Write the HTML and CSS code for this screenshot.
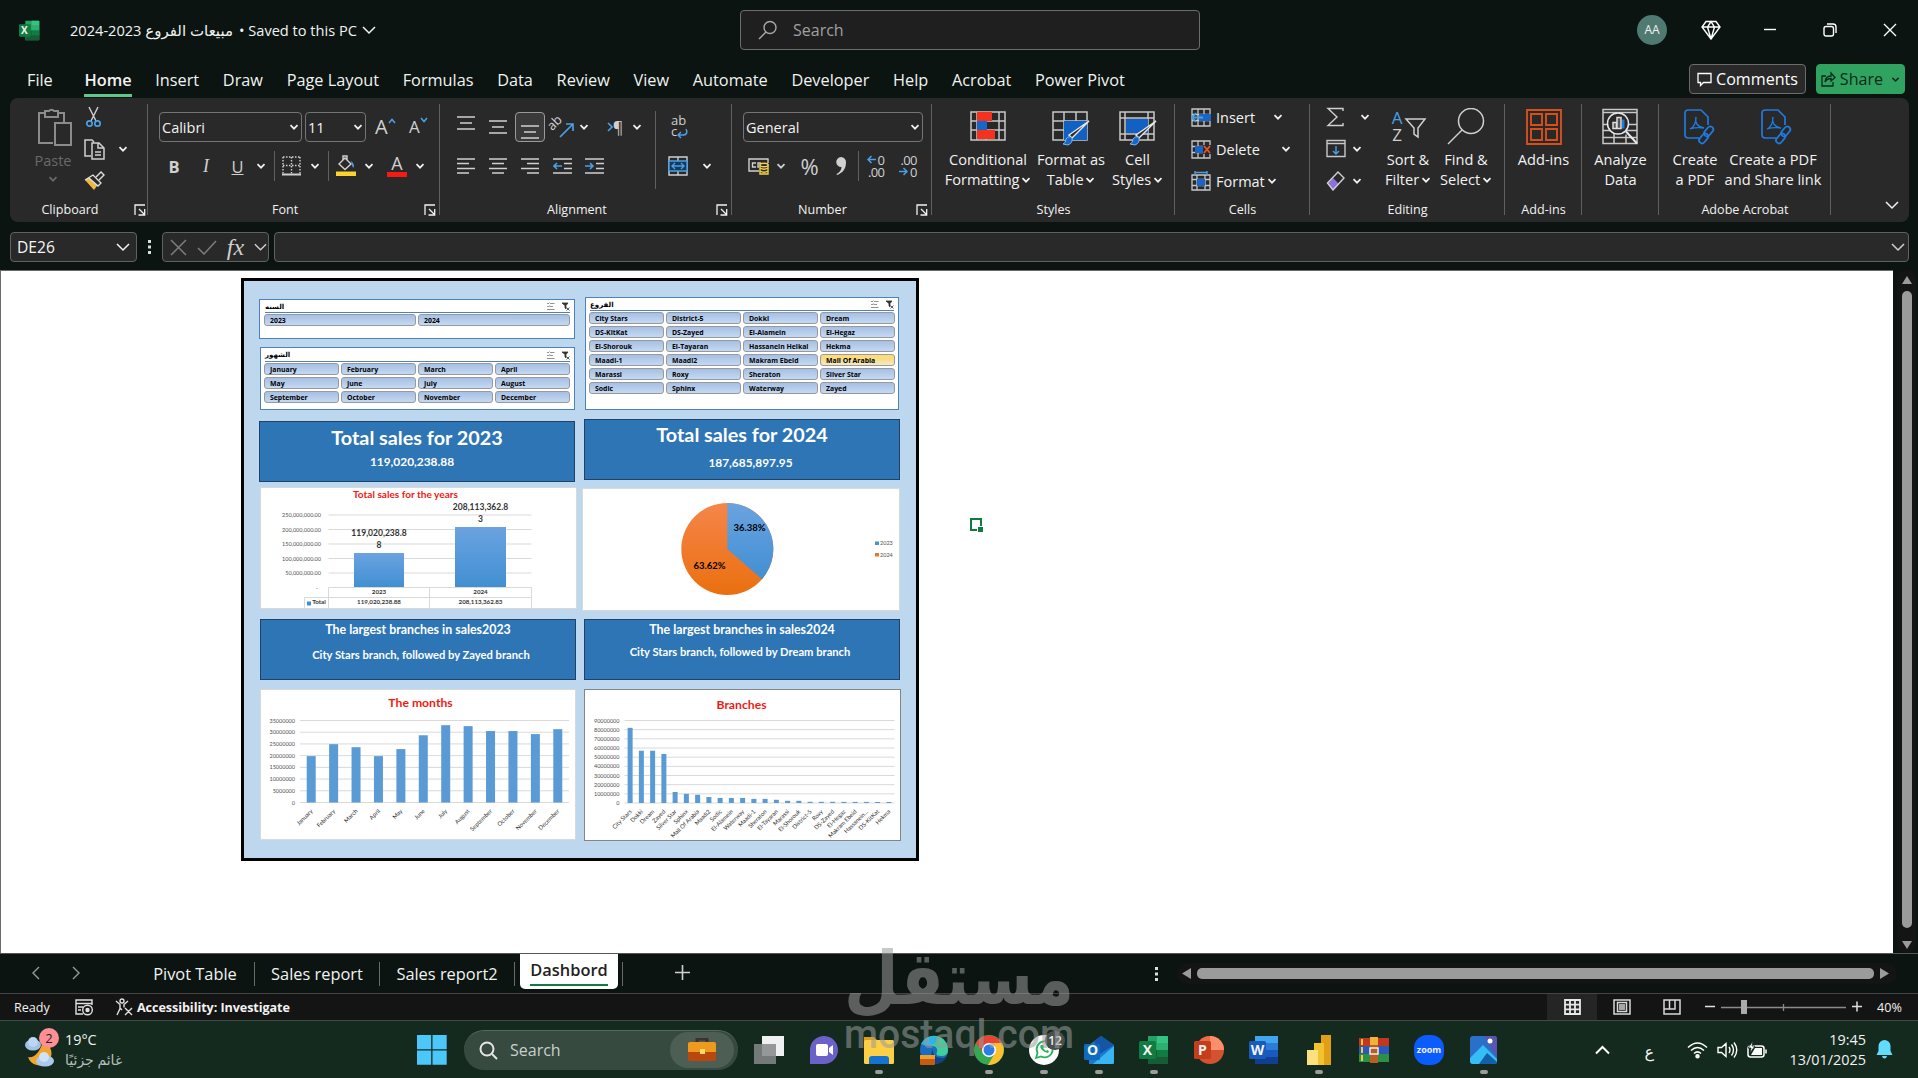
FILE: index.html
```html
<!DOCTYPE html>
<html lang="en">
<head>
    <meta charset="utf-8">
    <title>Excel</title>
    <link rel="stylesheet" href="styles.css">
</head>
<body>
    <!-- shared icons -->
    <svg class="defs" width="0" height="0">
        <symbol id="chev" viewBox="0 0 10 10"><path d="M1.5 3.2 5 6.7 8.5 3.2" fill="none" stroke="currentColor" stroke-width="1.7"/></symbol>
        <symbol id="chevThin" viewBox="0 0 14 10"><path d="M1 2 7 8 13 2" fill="none" stroke="currentColor" stroke-width="1.5"/></symbol>
        <symbol id="launch" viewBox="0 0 12 12"><path d="M1 11V1H11M5 5l5.5 5.5M10.7 5v6H4.5" fill="none" stroke="currentColor" stroke-width="1.3"/></symbol>
        <symbol id="multi" viewBox="0 0 9 9"><path d="M1 1l1 1 1.500-1.500M1 4l1 1 1.500-1.500M4 1.500h4.500M3.500 4.500H7M1 7.500h7.500" fill="none" stroke="#777" stroke-width=".8"/></symbol>
        <symbol id="clear" viewBox="0 0 9 9"><path d="M1 1h6L5 3.500V7L4 6V3.500zM5.500 5.500l3 3M8.500 5.500l-3 3" fill="#333" stroke="#333" stroke-width=".8"/></symbol>
        <symbol id="xl" viewBox="0 0 30 30"><path d="M9 1h19a1 1 0 0 1 1 1v26a1 1 0 0 1-1 1H9z" fill="#21a366"/><path d="M18 1h10a1 1 0 0 1 1 1v6H18z" fill="#33c481"/><path d="M9 15h20v13a1 1 0 0 1-1 1H9z" fill="#185c37"/><path d="M18 8h11v7H18z" fill="#2fae72"/><path d="M18 15h11v7H18z" fill="#107c41"/><rect y="6" width="17" height="18" rx="1.500" fill="#107c41"/></symbol>
        <linearGradient id="barFill" x1="0" y1="0" x2="0" y2="1"><stop offset="0" stop-color="#6ba3de"/><stop offset=".5" stop-color="#5599db"/><stop offset="1" stop-color="#428fd0"/></linearGradient>
        <linearGradient id="orangeFill" x1="0" y1="0" x2="0" y2="1"><stop offset="0" stop-color="#f5854a"/><stop offset=".5" stop-color="#f07a2c"/><stop offset="1" stop-color="#e9700f"/></linearGradient>
    </svg>

    <header class="titlebar">
        <span class="app-icon"><svg width="21" height="21"><use href="#xl"/></svg><b>X</b></span>
        <span class="doc-title" dir="ltr">2024-2023 <bdi>مبيعات الفروع</bdi></span><span class="saved">• Saved to this PC</span>
        <svg class="title-chev" width="14" height="10"><use href="#chevThin"/></svg>
        <div class="search"><svg width="20" height="20" viewBox="0 0 20 20" fill="none" stroke="#a8a8a8" stroke-width="1.400"><circle cx="12" cy="7.500" r="6"/><path d="M8 12 1 19"/></svg><span>Search</span></div>
        <div class="window-tools">
            <span class="avatar">AA</span>
            <svg width="20" height="20" viewBox="0 0 20 20" fill="none" stroke="#fff" stroke-width="1.400"><path d="M5 1.500h10L19 7l-9 12L1 7zM1 7h18M10 1.500 6.500 7 10 19l3.500-12z"/></svg>
            <svg width="14" height="14" viewBox="0 0 14 14"><path d="M1 6.500h12" stroke="#fff" stroke-width="1.400"/></svg>
            <svg width="14" height="14" viewBox="0 0 14 14" fill="none" stroke="#fff" stroke-width="1.400"><rect x="1" y="3.500" width="9.500" height="9.500" rx="2"/><path d="M4 1h6a3 3 0 0 1 3 3v6"/></svg>
            <svg width="14" height="14" viewBox="0 0 14 14"><path d="M1 1l12 12M13 1 1 13" stroke="#fff" stroke-width="1.400"/></svg>
        </div>
    </header>

    <nav class="menu">
        <span>File</span><span class="active">Home</span><span>Insert</span><span>Draw</span><span>Page Layout</span><span>Formulas</span><span>Data</span><span>Review</span><span>View</span><span>Automate</span><span>Developer</span><span>Help</span><span>Acrobat</span><span>Power Pivot</span>
        <div class="menu-buttons">
            <button class="comments"><svg width="15" height="15" viewBox="0 0 15 15" fill="none" stroke="#fff" stroke-width="1.300"><path d="M1 1.500h13v9H6.500L3.500 13.500V10.500H1z"/></svg>Comments</button>
            <button class="share"><svg width="15" height="16" viewBox="0 0 15 16" fill="none" stroke="#0b2a18" stroke-width="1.300"><path d="M5 5H1v10h11v-4M4 11c.5-4 3-6 6-6V2l4 4.500L10 10V7.500C7.500 7.500 5.500 8.500 4 11z"/></svg>Share<svg width="9" height="9"><use href="#chev"/></svg></button>
        </div>
    </nav>

    <section class="ribbon">
        <div class="group clipboard">
            <div class="group-body">
                <div class="paste">
                    <svg width="36" height="40" viewBox="0 0 36 40" fill="none" stroke="#8c8c8c" stroke-width="2"><path d="M16 36H2V6h6M20 6h7v9M8 4h4a3 3 0 0 1 5 0h4v6H8z"/><rect x="18" y="16" width="16" height="22"/></svg>
                    <span>Paste</span>
                    <svg width="10" height="10"><use href="#chev"/></svg>
                </div>
                <div class="tool-col">
                    <div><svg width="20" height="22" viewBox="0 0 20 22" fill="none" stroke="#d0d0d0" stroke-width="1.400"><path d="M5 1l7 14M14 1 7 15"/><g stroke="#4aa0e6" stroke-width="1.700"><circle cx="5.500" cy="17.500" r="2.700"/><circle cx="13.500" cy="17.500" r="2.700"/></g></svg></div>
                    <div><svg width="21" height="21" viewBox="0 0 21 21" fill="none" stroke="#d0d0d0" stroke-width="1.500"><path d="M7 17H1V1h7l2 2M8 4h7l5 5v11H8zM14 4v5h6M11 13h6M11 16h6"/></svg><svg class="chev" width="10" height="10"><use href="#chev"/></svg></div>
                    <div><svg width="21" height="20" viewBox="0 0 21 20"><path d="M1 9 8 5l7 7-5 7z" fill="#f3b73e"/><path d="M1 9l8-5 8 8-3 3-9-8z" fill="#292929" stroke="#e0e0e0" stroke-width="1.300"/><path d="M12 6l5-5 3 3-5 5" fill="none" stroke="#e0e0e0" stroke-width="1.400"/></svg></div>
                </div>
            </div>
            <div class="group-label">Clipboard<svg width="12" height="12"><use href="#launch"/></svg></div>
        </div>

        <div class="group font">
            <div class="group-body rows">
                <div class="row boxes">
                    <span class="combo font-name">Calibri<svg width="10" height="10"><use href="#chev"/></svg></span>
                    <span class="combo font-size">11<svg width="10" height="10"><use href="#chev"/></svg></span>
                    <span class="grow big">A<svg width="8" height="6" viewBox="0 0 8 6"><path d="M1 5 4 1.500 7 5" fill="none" stroke="#4aa0e6" stroke-width="1.600"/></svg></span>
                    <span class="grow">A<svg width="8" height="6" viewBox="0 0 8 6"><path d="M1 1l3 3.500L7 1" fill="none" stroke="#4aa0e6" stroke-width="1.600"/></svg></span>
                </div>
                <div class="row font-tools">
                    <b class="letter">B</b><i class="letter serif">I</i><u class="letter">U</u>
                    <svg width="10" height="10"><use href="#chev"/></svg><hr>
                    <svg width="19" height="20" viewBox="0 0 19 20" fill="none" stroke="#d0d0d0" stroke-width="1.400"><path d="M1 1h17M1 1v17M18 1v17M9.500 1v17M1 9.500h17" stroke-dasharray="1.500 1.500"/><path d="M0 18.500h19" stroke-width="2"/></svg>
                    <svg width="10" height="10"><use href="#chev"/></svg><hr>
                    <svg width="20" height="22" viewBox="0 0 20 22"><path d="M3 9l6-6 6 6-6 5.500z M7 5V1h4v4" fill="none" stroke="#d0d0d0" stroke-width="1.400"/><path d="M15 6q4 3 2.500 7-2-2-2.500-7" fill="#4aa0e6"/><path d="M0 16.500h20v4.500H0z" fill="#fbd230"/></svg>
                    <svg width="10" height="10"><use href="#chev"/></svg>
                    <span class="font-color">A</span>
                    <svg width="10" height="10"><use href="#chev"/></svg>
                </div>
            </div>
            <div class="group-label">Font<svg width="12" height="12"><use href="#launch"/></svg></div>
        </div>

        <div class="group alignment">
            <div class="group-body">
                <div class="rows align-left">
                    <div class="row align-top">
                        <svg class="lines up" width="18" height="18" viewBox="0 0 18 18"><path d="M0 2h18M3 8h12M0 14h18"/></svg>
                        <svg class="lines" width="18" height="18" viewBox="0 0 18 18"><path d="M0 3h18M3 9h12M0 15h18"/></svg>
                        <span class="pressed"><svg class="lines down" width="18" height="18" viewBox="0 0 18 18"><path d="M0 4h18M3 10h12M0 16h18"/></svg></span>
                        <span class="orient"><small>ab</small><svg width="16" height="16" viewBox="0 0 16 16" fill="none" stroke="#4aa0e6" stroke-width="1.700"><path d="M1 15 14 2M7 2h7v7"/></svg></span>
                        <svg width="10" height="10"><use href="#chev"/></svg>
                        <span class="pilcrow"><svg width="6" height="10" viewBox="0 0 6 10"><path d="M1 1l4 4-4 4" fill="none" stroke="#4aa0e6" stroke-width="1.600"/></svg>¶</span>
                        <svg width="10" height="10"><use href="#chev"/></svg>
                    </div>
                    <div class="row align-h">
                        <svg class="lines" width="18" height="18" viewBox="0 0 18 18"><path d="M0 2h18M0 6.500h12M0 11.500h18M0 16h12"/></svg>
                        <svg class="lines" width="18" height="18" viewBox="0 0 18 18"><path d="M0 2h18M3 6.500h12M0 11.500h18M3 16h12"/></svg>
                        <svg class="lines" width="18" height="18" viewBox="0 0 18 18"><path d="M0 2h18M6 6.500h12M0 11.500h18M6 16h12"/></svg>
                        <svg class="lines" width="19" height="18" viewBox="0 0 19 18"><path d="M0 2h19M11 6.500h8M11 11.500h8M0 16h19"/><path class="blue" d="M9 9H1M4 6 1 9l3 3"/></svg>
                        <svg class="lines" width="19" height="18" viewBox="0 0 19 18"><path d="M0 2h19M11 6.500h8M11 11.500h8M0 16h19"/><path class="blue" d="M0 9h8M5 6l3 3-3 3"/></svg>
                    </div>
                </div>
                <div class="rows align-right">
                    <div class="row"><span class="wrap-text">ab<br>c<svg width="11" height="10" viewBox="0 0 11 10"><path d="M9 0c2 4 0 6-3 6H1M4 3 1 6l3 3" fill="none" stroke="#4aa0e6" stroke-width="1.500"/></svg></span></div>
                    <div class="row merge"><svg width="20" height="20" viewBox="0 0 20 20" fill="none" stroke="#d0d0d0" stroke-width="1.400"><path d="M1 1h18v18H1zM10 1v4M10 15v4"/><path d="M1 5h18v10H1z" fill="#173a5c" stroke="#4aa0e6"/><path d="M4 10h12M7 7l-3 3 3 3M13 7l3 3-3 3" stroke="#4aa0e6"/></svg><svg width="10" height="10"><use href="#chev"/></svg></div>
                </div>
            </div>
            <div class="group-label">Alignment<svg width="12" height="12"><use href="#launch"/></svg></div>
        </div>

        <div class="group number">
            <div class="group-body rows">
                <div class="row boxes"><span class="combo number-format">General<svg width="10" height="10"><use href="#chev"/></svg></span></div>
                <div class="row number-tools">
                    <svg width="22" height="20" viewBox="0 0 22 20" fill="none" stroke="#d0d0d0" stroke-width="1.400"><path d="M11 15H1V3h19v4M8 7H4.500v4H8M13 7h-3v4h1"/><g stroke="#f5d24b" fill="#292929"><path d="M12 9v9h8V9z"/><ellipse cx="16" cy="9" rx="4" ry="1.700"/><path d="M12 12q4 2.500 8 0M12 15q4 2.500 8 0"/></g></svg>
                    <svg width="10" height="10"><use href="#chev"/></svg>
                    <span class="percent">%</span>
                    <svg width="12" height="20" viewBox="0 0 12 20"><path d="M6 1a5 5 0 0 1 5 5.500C11 13 7.500 17 2 19l-.5-1C4.500 16.500 6.500 14 6.500 11A5 5 0 1 1 6 1z" fill="#d0d0d0"/></svg><hr>
                    <span class="decimals"><svg width="9" height="9" viewBox="0 0 9 9"><path d="M9 4.500H1M4.500 1 1 4.500 4.500 8" fill="none" stroke="#4aa0e6" stroke-width="1.500"/></svg>0<br>.00</span>
                    <span class="decimals">.00<br><svg width="9" height="9" viewBox="0 0 9 9"><path d="M0 4.500h8M4.500 1 8 4.500 4.500 8" fill="none" stroke="#4aa0e6" stroke-width="1.500"/></svg>0</span>
                </div>
            </div>
            <div class="group-label">Number<svg width="12" height="12"><use href="#launch"/></svg></div>
        </div>

        <div class="group styles">
            <div class="group-body">
                <div class="big-btn cond"><svg width="36" height="36" viewBox="0 0 36 36"><path d="M1 3h34v28H1zM7 3v28M16 3v28M29 3v28M1 12h34M1 21h34" fill="none" stroke="#c8c8c8" stroke-width="1.500"/><path d="M7 3h15v9H7zM7 21h18v9H7z" fill="#f5321e"/><path d="M7 12h10v9H7z" fill="#1a66c8"/></svg><span>Conditional</span><span>Formatting <svg width="10" height="10"><use href="#chev"/></svg></span></div>
                <div class="big-btn table"><svg width="38" height="36" viewBox="0 0 38 36"><path d="M1 3h34v28H1zM12 3v28M24 3v28M1 12h34M1 21h34" fill="none" stroke="#c8c8c8" stroke-width="1.500"/><path d="M12 12h23v19H12z" fill="#1160c4"/><path d="M37 12 20 29l-3-3z" fill="#292929" stroke="#e8e8e8" stroke-width="1.400"/><path d="M11 35q3-1 3-5 3-4 6-1 1 5-4 7z" fill="#1a66c8" stroke="#7ab8ef"/></svg><span>Format as</span><span>Table <svg width="10" height="10"><use href="#chev"/></svg></span></div>
                <div class="big-btn cell"><svg width="38" height="36" viewBox="0 0 38 36"><path d="M1 3h34v28H1zM6 3v28M29 3v28M1 9h34M1 25h34" fill="none" stroke="#c8c8c8" stroke-width="1.500"/><path d="M7 10h22v14H7z" fill="#1160c4"/><path d="M37 12 20 29l-3-3z" fill="#292929" stroke="#e8e8e8" stroke-width="1.400"/><path d="M11 35q3-1 3-5 3-4 6-1 1 5-4 7z" fill="#1a66c8" stroke="#7ab8ef"/></svg><span>Cell</span><span>Styles <svg width="10" height="10"><use href="#chev"/></svg></span></div>
            </div>
            <div class="group-label">Styles</div>
        </div>

        <div class="group cells">
            <div class="group-body tool-col">
                <div><svg width="20" height="19" viewBox="0 0 20 19"><path d="M1 1h18v17H1zM7 1v17M13 1v17M1 6.500h18M1 12.500h18" fill="none" stroke="#c8c8c8" stroke-width="1.300"/><path d="M8 6h12v7H8z" fill="#1a66c8"/><path d="M12 9.500H1M5 5 1 9.500 5 14" fill="none" stroke="#4aa0e6" stroke-width="1.800"/></svg><span class="w-insert">Insert</span><svg class="chev" width="10" height="10"><use href="#chev"/></svg></div>
                <div><svg width="20" height="19" viewBox="0 0 20 19"><path d="M1 1h18v17H1zM7 1v17M13 1v17M1 6.500h18M1 12.500h18" fill="none" stroke="#c8c8c8" stroke-width="1.300"/><path d="M4 6h8v7H4z" fill="#1a66c8"/><path d="M12 5h8v9h-8z" fill="#292929"/><path d="M13 6l6 7M19 6l-6 7" stroke="#e8552a" stroke-width="1.900"/></svg><span class="w-delete">Delete</span><svg class="chev" width="10" height="10"><use href="#chev"/></svg></div>
                <div><svg width="20" height="20" viewBox="0 0 20 20"><path d="M1 4h18v15H1zM6 4v15M14 4v15M1 8.500h18M1 14.500h18" fill="none" stroke="#c8c8c8" stroke-width="1.300"/><path d="M6 8h8v7H6z" fill="#1a66c8"/><path d="M4 1.500h12M4 0v4M16 0v4" stroke="#4aa0e6" stroke-width="1.400"/></svg><span class="w-format">Format</span><svg class="chev" width="10" height="10"><use href="#chev"/></svg></div>
            </div>
            <div class="group-label">Cells</div>
        </div>

        <div class="group editing">
            <div class="group-body">
                <div class="tool-col">
                    <div><svg width="20" height="20" viewBox="0 0 20 20"><path d="M17 4V1.500H2L11 10l-9 8.500h15V16" fill="none" stroke="#d0d0d0" stroke-width="1.400"/></svg><svg class="chev far" width="10" height="10"><use href="#chev"/></svg></div>
                    <div><svg width="20" height="20" viewBox="0 0 20 20" fill="none" stroke="#c8c8c8" stroke-width="1.400"><path d="M1 1.500h18v16H1zM1 4.500h18"/><path d="M10 7v8M7 12l3 3 3-3" stroke="#4aa0e6"/></svg><svg class="chev" width="10" height="10"><use href="#chev"/></svg></div>
                    <div><svg width="20" height="20" viewBox="0 0 20 20"><path d="M2 12l5-5 6 6-6 6z" fill="#8f6fe0"/><path d="M1.500 12 12 1l6 6L7 19z" fill="none" stroke="#d0d0d0" stroke-width="1.400"/></svg><svg class="chev" width="10" height="10"><use href="#chev"/></svg></div>
                </div>
                <div class="big-btn sort"><span class="az"><em>A</em>Z</span><svg width="38" height="36" viewBox="0 0 38 36"><path d="M17 10h19l-7 9v9l-4-3v-6l-8-9z" fill="none" stroke="#d0d0d0" stroke-width="1.500"/></svg><span>Sort &amp;</span><span>Filter <svg width="10" height="10"><use href="#chev"/></svg></span></div>
                <div class="big-btn find"><svg width="38" height="38" viewBox="0 0 38 38"><circle cx="24" cy="13" r="12.500" fill="none" stroke="#d0d0d0" stroke-width="1.500"/><path d="M15 22 1 36" stroke="#d0d0d0" stroke-width="1.500"/></svg><span>Find &amp;</span><span>Select <svg width="10" height="10"><use href="#chev"/></svg></span></div>
            </div>
            <div class="group-label">Editing</div>
        </div>

        <div class="group addins">
            <div class="group-body"><div class="big-btn"><svg width="36" height="36" viewBox="0 0 36 36" fill="none" stroke="#d6501c" stroke-width="1.900"><path d="M1 1h34v34H1zM5 5h11v11H5zM20 5h11v11H20zM5 20h11v11H5zM20 20h11v11H20z"/></svg><span>Add-ins</span></div></div>
            <div class="group-label">Add-ins</div>
        </div>

        <div class="group analyze">
            <div class="group-body"><div class="big-btn"><svg width="37" height="37" viewBox="0 0 37 37" fill="none" stroke="#c8c8c8" stroke-width="1.500"><path d="M1 1h34v34H1zM1 4h34M1 16h34M1 22h34M1 29h34M12 22v13M24 26v9"/><circle cx="16" cy="15" r="10.500" fill="#292929" stroke="#e8e8e8"/><path d="M24 23l11 12" stroke="#e8e8e8" stroke-width="2"/><path d="M11 14h3.500v6H11zM15 9h4v11h-4z" fill="#555" stroke="#ddd"/><path d="M20 11h2.500v9H20z" fill="#1a7be0" stroke="none"/></svg><span>Analyze</span><span>Data</span></div></div>
            <div class="group-label"></div>
        </div>

        <div class="group acrobat">
            <div class="group-body">
                <div class="big-btn create"><svg width="34" height="36" viewBox="0 0 34 36" fill="none" stroke="#1f7be0" stroke-width="1.700"><path d="M16 29H5a3 3 0 0 1-3-3V4a3 3 0 0 1 3-3h13l7 7v8"/><path d="M7 20q6-3 6-12-2 9 8 11-8-1-14 1z" stroke-width="1.300"/><rect x="23" y="17" width="6" height="11" rx="3" transform="rotate(40 26 22)"/><rect x="18" y="24" width="6" height="11" rx="3" transform="rotate(40 21 29)"/></svg><span>Create</span><span>a PDF</span></div>
                <div class="big-btn create-share"><svg width="34" height="36" viewBox="0 0 34 36" fill="none" stroke="#1f7be0" stroke-width="1.700"><path d="M16 29H5a3 3 0 0 1-3-3V4a3 3 0 0 1 3-3h13l7 7v8"/><path d="M7 20q6-3 6-12-2 9 8 11-8-1-14 1z" stroke-width="1.300"/><rect x="23" y="17" width="6" height="11" rx="3" transform="rotate(40 26 22)"/><rect x="18" y="24" width="6" height="11" rx="3" transform="rotate(40 21 29)"/></svg><span>Create a PDF</span><span>and Share link</span></div>
            </div>
            <div class="group-label">Adobe Acrobat</div>
        </div>
        <svg class="collapse" width="14" height="10"><use href="#chevThin"/></svg>
    </section>

    <section class="formula-bar">
        <div class="name-box">DE26<svg width="14" height="10"><use href="#chevThin"/></svg></div>
        <svg class="vdots" width="4" height="14" viewBox="0 0 4 14" fill="#ddd"><path d="M0 0h3v3H0zM0 5.500h3v3H0zM0 11h3v3H0z"/></svg>
        <div class="fx-box">
            <svg width="17" height="17" viewBox="0 0 17 17"><path d="M1 1l15 15M16 1 1 16" stroke="#7d7d7d" stroke-width="1.500"/></svg>
            <svg width="20" height="15" viewBox="0 0 20 15"><path d="M1 8l6 6L19 1" fill="none" stroke="#7d7d7d" stroke-width="1.500"/></svg>
            <i>fx</i>
            <svg width="13" height="10" viewBox="0 0 14 10"><use href="#chevThin"/></svg>
        </div>
        <div class="formula-input"><svg width="14" height="10"><use href="#chevThin"/></svg></div>
    </section>

    <main class="workspace">
        <div class="sheet">
            <div class="dashboard">
                <div class="col left">
                    <div class="slicer s-year">
                        <div class="slicer-head"><b>السنه</b><svg width="9" height="9"><use href="#multi"/></svg><svg width="9" height="9"><use href="#clear"/></svg></div>
                        <div class="items two"><span>2023</span><span>2024</span></div>
                    </div>
                    <div class="slicer s-month">
                        <div class="slicer-head"><b>الشهور</b><svg width="9" height="9"><use href="#multi"/></svg><svg width="9" height="9"><use href="#clear"/></svg></div>
                        <div class="items"><span>January</span><span>February</span><span>March</span><span>April</span><span>May</span><span>June</span><span>July</span><span>August</span><span>September</span><span>October</span><span>November</span><span>December</span></div>
                    </div>
                    <div class="banner b-2023"><h2>Total sales for 2023</h2><p>119,020,238.88</p></div>
                    <svg class="chart c-years" id="yearsChart" width="317" height="122" viewBox="260 487 317 122"></svg>
                    <div class="banner small t-2023"><h3>The largest branches in sales2023</h3><p>City Stars branch, followed by Zayed branch</p></div>
                    <svg class="chart c-months" id="monthsChart" width="316" height="151" viewBox="260 689 316 151"></svg>
                </div>
                <div class="col right">
                    <div class="slicer s-branch">
                        <div class="slicer-head"><b>الفروع</b><svg width="9" height="9"><use href="#multi"/></svg><svg width="9" height="9"><use href="#clear"/></svg></div>
                        <div class="items"><span>City Stars</span><span>District-5</span><span>Dokki</span><span>Dream</span><span>DS-KitKat</span><span>DS-Zayed</span><span>El-Alamein</span><span>El-Hegaz</span><span>El-Shorouk</span><span>El-Tayaran</span><span>Hassanein Heikal</span><span>Hekma</span><span>Maadi-1</span><span>Maadi2</span><span>Makram Ebeid</span><span class="hover">Mall Of Arabia</span><span>Marassi</span><span>Roxy</span><span>Sheraton</span><span>Silver Star</span><span>Sodic</span><span>Sphinx</span><span>Waterway</span><span>Zayed</span></div>
                    </div>
                    <div class="banner b-2024"><h2>Total sales for 2024</h2><p>187,685,897.95</p></div>
                    <svg class="chart c-pie" width="318" height="123" viewBox="582 488 318 123">
                        <circle cx="727.3" cy="549" r="46" fill="url(#orangeFill)"/>
                        <path d="M727.3 549V503A46 46 0 0 1 762 579.200z" fill="url(#barFill)"/>
                        <text class="pct" x="749.5" y="531">36.38%</text>
                        <text class="pct" x="709.5" y="569">63.62%</text>
                        <path d="M875 541.500h4v3.500h-4z" fill="#4a91d3"/><path d="M875 553h4v3.500h-4z" fill="#ee7420"/>
                        <text class="tick" x="880" y="545">2023</text><text class="tick" x="880" y="557">2024</text>
                    </svg>
                    <div class="banner small t-2024"><h3>The largest branches in sales2024</h3><p>City Stars branch, followed by Dream branch</p></div>
                    <svg class="chart c-branches" id="branchesChart" width="317" height="152" viewBox="584 689 317 152"></svg>
                </div>
            </div>
            <svg class="cell-cursor" width="13" height="14" viewBox="0 0 13 14"><path d="M7 12H1V1h10v7" fill="none" stroke="#107c41" stroke-width="2"/><path d="M8 9h5v5H8z" fill="#107c41"/></svg>
        </div>
        <div class="vscroll">
            <svg width="10" height="8" viewBox="0 0 10 8"><path d="M5 0l5 8H0z" fill="#9b9b9b"/></svg>
            <div class="thumb"></div>
            <svg width="10" height="8" viewBox="0 0 10 8"><path d="M5 8 0 0h10z" fill="#9b9b9b"/></svg>
        </div>
    </main>

    <section class="sheet-tabs">
        <svg class="nav-prev" width="8" height="14" viewBox="0 0 8 14"><path d="M7 1 1 7l6 6" fill="none" stroke="#9a9a9a" stroke-width="1.400"/></svg>
        <svg class="nav-next" width="8" height="14" viewBox="0 0 8 14"><path d="M1 1l6 6-6 6" fill="none" stroke="#9a9a9a" stroke-width="1.400"/></svg>
        <span class="tab t1">Pivot Table</span><span class="tab t2">Sales report</span><span class="tab t3">Sales report2</span>
        <span class="tab current"><u>Dashbord</u></span><span class="tab-end"></span>
        <svg class="add" width="15" height="15" viewBox="0 0 15 15"><path d="M7.500 0v15M0 7.500h15" stroke="#d0d0d0" stroke-width="1.600"/></svg>
        <svg class="vdots" width="4" height="14" viewBox="0 0 4 14" fill="#ddd"><path d="M0 0h3v3H0zM0 5.500h3v3H0zM0 11h3v3H0z"/></svg>
        <div class="hscroll">
            <svg width="9" height="11" viewBox="0 0 9 11"><path d="M0 5.500 9 0v11z" fill="#9b9b9b"/></svg>
            <div class="thumb"></div>
            <svg width="9" height="11" viewBox="0 0 9 11"><path d="M9 5.500 0 0v11z" fill="#9b9b9b"/></svg>
        </div>
    </section>

    <section class="status">
        <span class="ready">Ready</span>
        <svg class="macro" width="18" height="17" viewBox="0 0 18 17" fill="none" stroke="#e0e0e0" stroke-width="1.400"><path d="M8 15H1V1h16v5M1 4.500h16M3 8h5M3 11h3"/><circle cx="12.500" cy="11" r="4.800"/><circle cx="12.500" cy="11" r="1.500" fill="#e0e0e0"/></svg>
        <svg class="access" width="18" height="18" viewBox="0 0 18 18" fill="none" stroke="#e0e0e0" stroke-width="1.400"><circle cx="7" cy="3" r="2"/><path d="M1 3l4 3.500v4L2 17M13 3 9 6.500v3M5 10l2 2M10 10l7 7M17 10l-7 7"/></svg>
        <b>Accessibility: Investigate</b>
        <div class="views">
            <span class="on"><svg width="17" height="16" viewBox="0 0 17 16" fill="none" stroke="#e8e8e8" stroke-width="1.800"><path d="M1 1h15v14H1zM6 1v14M11 1v14M1 5.700h15M1 10.300h15"/></svg></span>
            <span><svg width="18" height="16" viewBox="0 0 18 16" fill="none" stroke="#d8d8d8" stroke-width="1.500"><path d="M1 1h16v14H1zM4.500 3.500h9v9h-9zM6 6h6M6 8h6M6 10h6"/></svg></span>
            <span><svg width="18" height="16" viewBox="0 0 18 16" fill="none" stroke="#d8d8d8" stroke-width="1.500"><path d="M1 1h16v14H1zM1 10h11V1M6.500 1v9"/></svg></span>
        </div>
        <svg class="zoom" width="160" height="16" viewBox="0 0 160 16" stroke="#e0e0e0" fill="none"><path d="M1 7.500h10M148 7.500h10M153 2.500v10" stroke-width="1.500"/><path d="M17 8.500h125M79.500 5v7" stroke="#8a8a8a" stroke-width="1.300"/><path d="M37 1h6v14h-6z" fill="#ababab" stroke="none"/></svg>
        <span class="zoom-value">40%</span>
    </section>

    <footer class="taskbar">
        <div class="weather">
            <svg width="32" height="36" viewBox="0 0 32 36"><path d="M19 10a12 12 0 1 1-15 15q9 2 15-15z" fill="#f2a52b"/><ellipse cx="9" cy="13" rx="8" ry="5.500" fill="#9fc2ea"/><circle cx="9" cy="10" r="5" fill="#bcd6f3"/><ellipse cx="21" cy="29" rx="9" ry="5.500" fill="#a9caef"/><circle cx="20" cy="25" r="5" fill="#cfe2f8"/></svg>
            <span class="badge">2</span>
            <div>19°C<br><bdi>غائم جزئيًا</bdi></div>
        </div>
        <svg class="start" width="30" height="30" viewBox="0 0 30 30" fill="#4cc7fa"><path d="M0 0h14.200v14.200H0zM15.500 0h14.200v14.200H15.500zM0 15.500h14.200v14.200H0zM15.500 15.500h14.200v14.200H15.500z"/></svg>
        <div class="task-search"><svg width="19" height="19" viewBox="0 0 19 19" fill="none" stroke="#e5e5e5" stroke-width="2"><circle cx="8" cy="8" r="6.500"/><path d="M13 13l5 5"/></svg>Search<span class="brief"><svg width="28" height="24" viewBox="0 0 28 24"><path d="M9 5V1h10v4" fill="none" stroke="#3a3330" stroke-width="3"/><rect y="4" width="28" height="19" rx="2" fill="#b9480f"/><path d="M0 6q0-2 2-2h24q2 0 2 2v8H0z" fill="#ee9a1e"/><path d="M12 11h5v5h-5z" fill="#fbd96b"/></svg></span></div>
        <div class="apps">
            <span><svg width="30" height="30" viewBox="0 0 30 30"><path d="M8 1h22v20H8z" fill="#eef0f2"/><path d="M0 9h22v20H0z" fill="#85888a" opacity=".85"/></svg></span>
            <span><svg width="30" height="30" viewBox="0 0 30 30"><path d="M1 29V14a14 14 0 1 1 14 15z" fill="#6b62c9"/><rect x="7" y="9" width="12" height="12" rx="2" fill="#fff"/><path d="M20 13l4-3v10l-4-3z" fill="#fff"/></svg></span>
            <span class="open"><svg width="30" height="30" viewBox="0 0 30 30"><path d="M0 2h10l4 4v8H0z" fill="#e09e17"/><rect y="5" width="30" height="24" rx="1.500" fill="#fccf45"/><path d="M5 29v-5q0-3 3-3h14q3 0 3 3v5z" fill="#1573cf"/></svg></span>
            <span><svg width="30" height="30" viewBox="0 0 30 30"><circle cx="15" cy="15" r="14" fill="#1b6dc1"/><path d="M4 6A14 14 0 0 1 29 15q0 6-7 6-6 0-4-4 1-5-4-6-6-1-10-5z" fill="#3fcf9b"/><path d="M2 9A14 14 0 0 1 19 2q-2 8-8 9-5 0-9-2z" fill="#2bb5ea"/><path d="M14 14q-1 9 10 9l4-2q-4 8-12 8-6-8-2-15z" fill="#12427f"/><rect x="1" y="20" width="15" height="10" rx="1" fill="#c85b14"/><path d="M1 20h15v4H1z" fill="#f0a12c"/></svg></span>
            <span class="open"><svg width="30" height="30" viewBox="0 0 30 30"><circle cx="15" cy="15" r="15" fill="#34a853"/><path d="M2 8A15 15 0 0 1 28 8H15L9 18z" fill="#ea4335"/><path d="M28 8H15l6 10-7 12A15 15 0 0 0 28 8z" fill="#fbc02d"/><circle cx="15" cy="15" r="7" fill="#fff"/><circle cx="15" cy="15" r="5.500" fill="#2a7de9"/></svg></span>
            <span class="open"><svg width="30" height="30" viewBox="0 0 30 30"><circle cx="15" cy="15" r="15" fill="#fff"/><path d="M7 23l1.500-5A8 8 0 1 1 12 21.500z" fill="none" stroke="#2db25c" stroke-width="1.800"/><path d="M12 10q-2 2 1 5t6 3l1-2-2-1-1 1-3-3 1-1-1-2z" fill="#2db25c"/></svg><em>12</em></span>
            <span class="open office"><svg width="30" height="30" viewBox="0 0 30 30"><path d="M5 10 17 1l13 9v19H5z" fill="#1a78d0"/><path d="M10 6 17 1l13 9-16 10z" fill="#1455a8"/><path d="M30 11v16q0 2-2 2H9z" fill="#38b5f2"/><rect y="9" width="16" height="16" rx="1.500" fill="#0f6cbd"/></svg><b>O</b></span>
            <span class="open office"><svg width="30" height="30"><use href="#xl"/></svg><b>X</b></span>
            <span class="office"><svg width="30" height="30" viewBox="0 0 30 30"><circle cx="16" cy="15" r="14" fill="#d35230"/><path d="M16 1a14 14 0 0 1 14 14H16z" fill="#ff8f6b"/><path d="M16 1A14 14 0 0 0 2 15h14z" fill="#ed6c47"/><rect y="6" width="17" height="18" rx="1.500" fill="#c43e1c"/></svg><b>P</b></span>
            <span class="office"><svg width="30" height="30" viewBox="0 0 30 30"><path d="M6 1h23v28H6z" fill="#2b7cd3"/><path d="M6 1h23v7H6z" fill="#41a5ee"/><path d="M6 22h23v7H6z" fill="#103f91"/><path d="M6 15h23v7H6z" fill="#185abd"/><rect y="6" width="17" height="18" rx="1.500" fill="#185abd"/></svg><b>W</b></span>
            <span class="open"><svg width="26" height="30" viewBox="0 0 26 30"><path d="M15 0h10v30H15z" fill="#e0a016"/><path d="M8 8h10v22H8z" fill="#f2c32f"/><path d="M1 15h11v15H1z" fill="#fbe07e"/></svg></span>
            <span><svg width="30" height="28" viewBox="0 0 30 28"><rect y="2" width="30" height="8" fill="#c2371f"/><rect y="10" width="30" height="8" fill="#2c59b8"/><rect y="18" width="30" height="8" fill="#2a9147"/><path d="M2 3h2v6H2zM2 11h2v6H2zM2 19h2v6H2z" fill="#f1c93a"/><path d="M11 1h8v26h-8z" fill="#b85f24"/><path d="M11 1h8v8h-8z" fill="#f1b23a"/><path d="M11 12h8v6h-8z" fill="none" stroke="#eee" stroke-width="1.500"/></svg></span>
            <span class="zoom-app">zoom</span>
            <span class="open"><svg width="27" height="28" viewBox="0 0 27 28"><rect width="27" height="28" rx="3" fill="#2a70c8"/><path d="M14 0h10a3 3 0 0 1 3 3v19z" fill="#5a55b0"/><path d="M0 22 13 9l14 14v2a3 3 0 0 1-3 3H3a3 3 0 0 1-3-3z" fill="#35bdf5"/><path d="M9 28 17 17l10 9q0 2-3 2z" fill="#1160a8"/><circle cx="20" cy="5" r="2.500" fill="#fff"/></svg></span>
        </div>
        <div class="tray">
            <svg class="up" width="15" height="10" viewBox="0 0 15 10"><path d="M1 8.500l6.500-6.500L14 8.500" fill="none" stroke="#fff" stroke-width="2"/></svg>
            <bdi class="lang">ع</bdi>
            <svg width="21" height="18" viewBox="0 0 21 18" fill="none" stroke="#fff" stroke-width="1.500"><path d="M1 6.500q9.500-9 19 0M4 9.500q6.500-6 13 0M7 12.500q3.500-3.200 7 0"/><circle cx="10.500" cy="15.300" r="1.500" fill="#fff"/></svg>
            <svg width="21" height="18" viewBox="0 0 21 18" fill="none" stroke="#fff" stroke-width="1.400"><path d="M1 6.500h3.500L9 2.500v13l-4.500-4H1zM12 6q2 3 0 6M14.500 3.500q4 5.500 0 11M17 1.500q5.500 7.500 0 15"/></svg>
            <svg width="21" height="18" viewBox="0 0 21 18" fill="none" stroke="#fff" stroke-width="1.500"><rect x="1" y="5" width="16" height="11" rx="2.500"/><path d="M19 8.500v4"/><path d="M8 7h7v7H4z" fill="#fff" stroke="none"/><path d="M6 0 1 7h3l-1 5 5-7H5z" fill="#fff" stroke="#152a1f" stroke-width=".8"/></svg>
            <div class="clock">19:45<br>13/01/2025</div>
            <svg class="bell" width="17" height="19" viewBox="0 0 17 19"><path d="M8.500 0a6 6 0 0 1 6 6v5l2 4H.500l2-4V6a6 6 0 0 1 6-6zM6 16h5q-.500 2.500-2.500 2.500T6 16z" fill="#61dcfb"/></svg>
        </div>
    </footer>

    <svg class="watermark" width="240" height="125" viewBox="0 0 240 125">
        <text class="wm-ar" x="120" y="59" textLength="230" lengthAdjust="spacingAndGlyphs">مستقل</text>
        <text class="wm-en" x="120" y="103" textLength="230" lengthAdjust="spacingAndGlyphs">mostaql.com</text>
    </svg>

    <script>
        const NS = "http://www.w3.org/2000/svg";

        function add(svg, name, attrs, text) {
            const el = document.createElementNS(NS, name);
            for (const key in attrs) el.setAttribute(key, attrs[key]);
            if (text) el.textContent = text;
            svg.appendChild(el);
            return el;
        }

        // simple column chart: gridlines, value ticks, bars, slanted labels
        function columnChart(id, o) {
            const svg = document.getElementById(id);
            add(svg, "text", { class: "chart-title", x: o.titleX, y: o.titleY }, o.title);
            for (let i = 0; i <= o.steps; i++) {
                const y = o.bottom - (o.bottom - o.top) * i / o.steps;
                add(svg, "line", { class: "grid", x1: o.left, x2: o.right, y1: y, y2: y });
                add(svg, "text", { class: "tick end", x: o.left - 5, y: y + 2 }, String(i * o.unit));
            }
            const pitch = (o.right - o.left) / o.data.length;
            o.data.forEach(function (item, i) {
                const cx = o.left + pitch * (i + 0.5);
                const h = (o.bottom - o.top) * item[1] / (o.steps * o.unit);
                add(svg, "rect", { class: "bar", x: cx - o.barWidth / 2, y: o.bottom - h, width: o.barWidth, height: h });
                const x = cx + 2, y = o.bottom + 9;
                add(svg, "text", { class: "slant", x: x, y: y, transform: "rotate(-45 " + x + " " + y + ")" }, item[0]);
            });
        }

        columnChart("monthsChart", {
            title: "The months", titleX: 420.5, titleY: 706.5,
            left: 300, right: 569, top: 720.5, bottom: 802.5, steps: 7, unit: 5000000, barWidth: 9,
            data: [["January", 19800000], ["February", 24900000], ["March", 23600000], ["April", 19800000],
                ["May", 22800000], ["June", 28700000], ["July", 33000000], ["August", 32600000],
                ["September", 30500000], ["October", 30500000], ["November", 29200000], ["December", 31300000]]
        });

        columnChart("branchesChart", {
            title: "Branches", titleX: 741.5, titleY: 708.5,
            left: 624.5, right: 894.5, top: 720.5, bottom: 803, steps: 9, unit: 10000000, barWidth: 5,
            data: [["City Stars", 82000000], ["Dokki", 57000000], ["Dream", 57000000], ["Zayed", 53500000],
                ["Silver Star", 12000000], ["Sphinx", 10000000], ["Mall Of Arabia", 9000000], ["Maadi2", 6500000],
                ["Sodic", 5500000], ["El-Alamein", 5500000], ["Waterway", 5500000], ["Maadi-1", 4500000],
                ["Sheraton", 4500000], ["El-Tayaran", 3500000], ["Marassi", 2400000], ["El-Shorouk", 2400000],
                ["District-5", 1300000], ["Roxy", 1300000], ["DS-Zayed", 1300000], ["El-Hegaz", 1200000],
                ["Makram Ebeid", 1200000], ["Hassanein…", 1200000], ["DS-KitKat", 1100000], ["Hekma", 1100000]]
        });

        // yearly totals with the data table under the plot
        const years = document.getElementById("yearsChart");
        add(years, "text", { class: "chart-title years", x: 405.5, y: 498 }, "Total sales for the years");
        ["50,000,000.00", "100,000,000.00", "150,000,000.00", "200,000,000.00", "250,000,000.00"].forEach(function (label, i) {
            const y = 573 - i * 14.5;
            add(years, "line", { class: "grid", x1: 328.5, x2: 531.5, y1: y, y2: y });
            add(years, "text", { class: "tick end", x: 321, y: y + 2 }, label);
        });
        add(years, "text", { class: "tick end", x: 318, y: 590 }, "-");
        add(years, "rect", { x: 354, y: 553, width: 50, height: 34.5, fill: "url(#barFill)" });
        add(years, "rect", { x: 455, y: 527, width: 51, height: 60.5, fill: "url(#barFill)" });
        add(years, "path", { class: "grid", d: "M328.5 587.5h203M304.5 597.5h227M328.5 587.5v21M429.5 587.5v21M531.5 587.5v21M304.5 597.5v11" });
        add(years, "path", { d: "M307 601.500h4v4h-4z", fill: "#428fd0" });
        [["119,020,238.8", 379, 536], ["8", 379, 548], ["208,113,362.8", 480.5, 510], ["3", 480.5, 522]].forEach(function (t) {
            add(years, "text", { class: "value", x: t[1], y: t[2] }, t[0]);
        });
        [["2023", 379, 594], ["2024", 480.5, 594], ["119,020,238.88", 379, 604], ["208,113,362.83", 480.5, 604], ["Total", 319, 604]].forEach(function (t) {
            add(years, "text", { class: "cell-text", x: t[1], y: t[2] }, t[0]);
        });
    </script>
</body>
</html>
```
FILE: styles.css
```css
* {
    box-sizing: border-box;
}

body {
    margin: 0;
    width: 1918px;
    height: 1078px;
    overflow: hidden;
    background: #0b1410;
    color: #f2f2f2;
    font-family: "Open Sans", "DejaVu Sans", sans-serif;
    font-size: 15px;
}

svg {
    flex: none;
    display: block;
}

.defs {
    position: absolute;
}

/* title bar */
.titlebar {
    display: flex;
    align-items: center;
    height: 60px;
    padding-left: 19px;
    font-size: 14.6px;
    white-space: nowrap;
}

.app-icon,
.office {
    position: relative;
}

.app-icon b {
    position: absolute;
    left: 2px;
    top: 4px;
    font-size: 10px;
    line-height: 13px;
}

.doc-title {
    width: 163px;
    margin-left: 30px;
}

.doc-title bdi {
    font-size: 15px;
}

.saved {
    width: 126px;
    margin-left: 6px;
}

.title-chev {
    margin-left: -3px;
}

.search {
    display: flex;
    align-items: center;
    width: 460px;
    height: 40px;
    margin-left: 364px;
    padding-left: 17px;
    gap: 15px;
    border: 1px solid #6c6c6c;
    border-radius: 4px;
    background: #1f1f1f;
    color: #a0a0a0;
    font-size: 16px;
}

.window-tools {
    display: flex;
    align-items: center;
    margin-left: 437px;
}

.window-tools svg {
    margin-left: 46px;
}

.window-tools .avatar + svg {
    margin-left: 34px;
}

.window-tools .avatar + svg + svg {
    margin-left: 42px;
}

.avatar {
    width: 30px;
    height: 30px;
    border-radius: 50%;
    background: #4f7a72;
    font-size: 12px;
    line-height: 30px;
    text-align: center;
}

/* menu */
.menu {
    display: flex;
    align-items: center;
    gap: 23.7px;
    height: 38px;
    padding: 0 13px 0 27px;
    font-size: 16.3px;
    white-space: nowrap;
}

.menu > span {
    padding-top: 2px;
    line-height: 30px;
}

.menu .active {
    margin: 2px 0 0 8px;
    padding-top: 3px;
    border-bottom: 3px solid #5cc98a;
    font-weight: 600;
    line-height: 27px;
}

.menu-buttons {
    display: flex;
    gap: 10px;
    margin-left: auto;
}

.menu-buttons button {
    display: flex;
    align-items: center;
    justify-content: center;
    gap: 4px;
    height: 30px;
    padding: 0;
    border: 1px solid #6c6c6c;
    border-radius: 4px;
    background: #292929;
    color: #fff;
    font: 500 16.1px "Open Sans", sans-serif;
}

.menu-buttons .comments {
    width: 117px;
}

.menu-buttons .share {
    width: 89px;
    border-color: #2fa35f;
    background: #2fa35f;
    color: #0b2a18;
    font-weight: 400;
}

.share svg:last-child {
    margin-left: 4px;
}

/* ribbon */
.ribbon {
    display: flex;
    height: 124px;
    margin: 0 9px 0 10px;
    border-radius: 8px;
    background: #292929;
}

.group {
    display: flex;
    flex-direction: column;
    height: 124px;
    background: linear-gradient(#606060, #606060) right 6px / 1px 111px no-repeat;
}

.group-body {
    display: flex;
    height: 100px;
}

.group-label {
    display: flex;
    align-items: center;
    justify-content: center;
    height: 24px;
    padding-bottom: 1px;
    font-size: 12.6px;
}

.group-label svg {
    margin-right: 4px;
}

.clipboard { width: 138px; }
.font { width: 292px; }
.alignment { width: 292px; }
.number { width: 200px; }
.styles { width: 243px; }
.cells { width: 135px; }
.editing { width: 195px; }
.addins, .analyze { width: 77px; }
.acrobat { width: 172px; }

.clipboard .group-label { padding-left: 32px; }
.clipboard .group-label svg { margin-left: 35px; margin-right: 3px; }
.font .group-label { padding-left: 124px; justify-content: flex-start; }
.alignment .group-label { padding-left: 107px; justify-content: flex-start; }
.number .group-label { padding-left: 66px; justify-content: flex-start; }
.font .group-label svg, .alignment .group-label svg, .number .group-label svg { margin-left: auto; }

.paste {
    display: flex;
    flex-direction: column;
    align-items: center;
    width: 60px;
    margin-left: 12px;
    padding: 9px 0 0 2px;
    color: #6a6a6a;
    font-size: 14.5px;
}

.paste > svg:first-child {
    margin-left: 3px;
}

.paste span {
    height: 27px;
    line-height: 27px;
}

.tool-col {
    display: flex;
    flex-direction: column;
    padding-top: 3px;
}

.tool-col > div {
    display: flex;
    align-items: center;
    height: 32px;
    font-size: 14.5px;
}

.clipboard .tool-col {
    padding-left: 2px;
}

.clipboard .tool-col .chev {
    margin-left: 13px;
}

.rows {
    display: flex;
    flex-direction: column;
    gap: 9px;
    padding-top: 14px;
}

.row {
    display: flex;
    align-items: center;
    height: 30px;
}

.row hr {
    width: 1px;
    height: 30px;
    margin: 0;
    border: 0;
    background: #606060;
}

.boxes {
    gap: 3px;
    padding-left: 11px;
}

.combo {
    display: flex;
    align-items: center;
    justify-content: space-between;
    height: 30px;
    padding: 0 2px;
    border: 1px solid #757575;
    border-radius: 4px;
    font-size: 14.5px;
}

.font-name { width: 143px; }
.font-size { width: 61px; }
.number-format { width: 180px; }

.grow {
    display: flex;
    align-items: flex-start;
    width: 33px;
    padding-left: 4px;
    color: #d0d0d0;
    font-size: 17px;
    line-height: 30px;
}

.grow.big {
    padding-left: 6px;
    font-size: 20px;
    line-height: 28px;
}

.grow svg {
    margin-top: 5px;
}

.font-tools {
    display: grid;
    grid-template-columns: 32px 32px 31px 16px 10px 25px 22px 4px 32px 14px 42px 4px;
    justify-items: center;
    justify-content: start;
    padding-left: 10px;
}

.letter {
    color: #d0d0d0;
    font-size: 16.5px;
}

.serif {
    font-family: "Liberation Serif", serif;
    font-size: 18px;
}

.font-color {
    width: 20px;
    height: 21px;
    border-bottom: 5px solid #f51a12;
    color: #d0d0d0;
    font-size: 18px;
    line-height: 15px;
    text-align: center;
}

.align-left {
    width: 215px;
    padding-left: 10px;
}

.align-top {
    display: grid;
    grid-template-columns: 32px 32px 32px 33px 9px 46px 6px;
    justify-items: center;
}

.align-h {
    display: grid;
    grid-template-columns: repeat(5, 32px);
    justify-items: center;
}

.lines {
    fill: none;
    stroke: #d0d0d0;
    stroke-width: 1.6;
}

.lines .blue {
    stroke: #4aa0e6;
}

.lines.up {
    margin-top: -6px;
}

.lines.down {
    margin-top: 7px;
}

.pressed {
    display: flex;
    align-items: center;
    justify-content: center;
    width: 30px;
    height: 30px;
    border: 1px solid #9a9a9a;
    border-radius: 4px;
    background: #3a3a3a;
}

.orient {
    display: flex;
    width: 22px;
    height: 24px;
    color: #d0d0d0;
}

.orient small {
    width: 6px;
    font-size: 13px;
    line-height: 17px;
    transform: rotate(-45deg) translateX(-2px);
}

.orient svg {
    margin: 7px 0 0 1px;
}

.pilcrow {
    display: flex;
    align-items: center;
    margin-left: 8px;
    color: #d0d0d0;
    font-size: 16px;
}

.align-right {
    width: 76px;
    padding-left: 13px;
    background: linear-gradient(#606060, #606060) 0 13px / 1px 78px no-repeat;
}

.wrap-text {
    padding-left: 3px;
    color: #d0d0d0;
    font-size: 13px;
    line-height: 11px;
}

.wrap-text svg {
    display: inline-block;
    vertical-align: -3px;
}

.merge {
    gap: 14px;
}

.number-tools {
    display: grid;
    grid-template-columns: 27px 18px 39px 24px 10px 25px 40px;
    justify-items: center;
    justify-content: start;
    padding-left: 13px;
    color: #d0d0d0;
}

.percent {
    font-size: 22px;
    line-height: 28px;
}

.decimals {
    font-size: 13px;
    line-height: 12px;
    text-align: right;
    letter-spacing: -.6px;
}

.decimals svg {
    display: inline-block;
    margin-right: 2px;
    vertical-align: 1px;
}

.big-btn {
    position: relative;
    display: flex;
    flex-direction: column;
    align-items: center;
    width: 77px;
    padding-top: 10px;
    font-size: 14.6px;
    line-height: 20px;
    text-align: center;
    white-space: nowrap;
}

.big-btn > svg {
    height: 38px;
    margin-bottom: 3px;
}

.big-btn > span > svg {
    display: inline-block;
    margin-left: -2px;
}

.styles .group-body { padding-left: 11px; }
.cond { width: 90px; }
.table { width: 76px; }
.cell { width: 57px; }

.cells .group-body {
    padding: 3px 0 0 16px;
    flex-direction: column;
}

.cells .group-body span {
    margin: 0 4px 0 5px;
}

.cells .group-body .w-insert { width: 53px; }
.cells .group-body .w-delete { width: 61px; }
.cells .group-body .w-format { width: 47px; }

.editing .tool-col {
    width: 68px;
    padding-left: 16px;
}

.editing .chev { margin-left: 6px; }
.editing .chev.far { margin-left: 14px; }
.editing .sort { width: 60px; }
.editing .find { width: 56px; }

.big-btn .az {
    position: absolute;
    left: 13px;
    top: 11px;
    width: 12px;
    color: #d0d0d0;
    font-size: 17px;
    line-height: 17px;
}

.az em {
    display: block;
    color: #4aa0e6;
    font-style: normal;
}

.create { width: 72px; }
.create-share { width: 84px; }
.create > svg { margin-left: 10px; }
.create-share > svg { margin-left: 8px; }

.collapse {
    align-self: flex-end;
    margin: 0 10px 12px auto;
}

/* formula bar */
.formula-bar {
    display: flex;
    align-items: center;
    height: 48px;
    padding: 2px 9px 0 10px;
}

.name-box,
.fx-box,
.formula-input {
    display: flex;
    align-items: center;
    justify-content: space-between;
    height: 30px;
    padding: 0 6px;
    border: 1px solid #616161;
    border-radius: 4px;
    background: #292929;
    color: #d0d0d0;
}

.name-box {
    width: 127px;
    color: #f5f5f5;
    font-size: 15.6px;
}

.formula-bar .vdots {
    margin: 0 10px 0 11px;
}

.fx-box {
    width: 107px;
    padding: 0 1px 0 7px;
}

.fx-box i {
    font: italic 24px "Liberation Serif", serif;
}

.formula-input {
    flex: 1;
    justify-content: flex-end;
    margin-left: 5px;
    padding: 0 3px;
}

/* sheet */
.workspace {
    display: flex;
    height: 683px;
}

.sheet {
    position: relative;
    width: 1893px;
    border: 1px solid #6b6b6b;
    border-right: 0;
    border-bottom: 0;
    background: #fff;
}

.cell-cursor {
    position: absolute;
    left: 969px;
    top: 247px;
}

.dashboard {
    display: flex;
    width: 678px;
    height: 583px;
    margin: 7px 0 0 240px;
    border: 3px solid #000;
    background: #bdd7ee;
}

.col {
    display: flex;
    flex-direction: column;
    align-items: flex-start;
}

.left {
    width: 338px;
    padding: 18px 0 0 15px;
}

.right {
    padding-top: 16px;
}

.slicer {
    padding: 1px 3px 0 4px;
    border: 1px solid #4f81bd;
    background: #fff;
    color: #000;
}

.s-year { width: 316px; height: 40px; }
.s-month { width: 315px; height: 63px; margin: 8px 0 0 1px; padding-left: 3px; }
.s-branch { width: 314px; height: 113px; margin-left: 3px; padding-left: 3px; }

.slicer-head {
    display: flex;
    align-items: center;
    gap: 6px;
    height: 12px;
    margin: 0 1px 1px 1px;
    border-bottom: 1px solid #4f81bd;
    font: bold 7px "DejaVu Sans", sans-serif;
}

.slicer-head b {
    flex: 1;
}

.items {
    display: grid;
    grid-template-columns: repeat(4, 75px);
    gap: 2px;
}

.items.two {
    grid-template-columns: 152px 152px;
}

.items span {
    height: 12px;
    padding-left: 5px;
    border: 1px solid #999;
    border-radius: 3px;
    background: linear-gradient(#a6bfe4, #c4d9f2);
    font: bold 6.9px/11px "Open Sans", sans-serif;
    white-space: nowrap;
}

.items .hover {
    background: linear-gradient(#fbdc7e 40%, #f2ead0);
}

.s-month .slicer-head {
    height: 13px;
}

.banner {
    width: 316px;
    height: 61px;
    border: 1px solid #1f4266;
    background: #2e75b6;
    color: #fff;
    font-family: Lato, sans-serif;
    text-align: center;
}

.banner h2,
.banner h3,
.banner p {
    margin: 0;
    font-weight: bold;
    white-space: nowrap;
}

.banner h2 {
    padding-top: 3px;
    font-size: 19.8px;
    line-height: 24px;
}

.banner p {
    font-size: 11.9px;
    line-height: 26px;
}

.banner h3 {
    font-size: 12.4px;
    line-height: 20px;
}

.banner.small p {
    font-size: 11.2px;
    line-height: 29px;
}

.b-2023 { margin-top: 11px; }
.b-2023 p { padding-right: 10px; }
.c-years { margin: 5px 0 0 1px; }
.t-2023 { margin: 10px 0 0 1px; }
.t-2023 p { padding-left: 6px; }
.c-months { margin: 9px 0 0 1px; }

.b-2024 { margin: 9px 0 0 2px; }
.b-2024 h2 { padding-top: 2px; }
.b-2024 p { padding-left: 17px; line-height: 34px; }
.c-pie { margin-top: 8px; }
.t-2024 { margin: 8px 0 0 2px; }
.t-2024 p { padding-right: 4px; }
.banner.t-2024 p { line-height: 24px; }
.c-branches { margin: 9px 0 0 2px; }

.chart {
    background: #fff;
    outline: 1px solid #d9d9d9;
    outline-offset: -1px;
    font-family: Lato, sans-serif;
}

.c-branches {
    outline-color: #858585;
}

.chart text {
    text-anchor: middle;
}

.chart .chart-title {
    fill: #f01a12;
    font-size: 12.2px;
    font-weight: bold;
}

.chart .years {
    font-size: 10.1px;
}

.chart .grid {
    fill: none;
    stroke: #d9d9d9;
}

.chart .bar {
    fill: #5b9bd5;
}

.chart .tick {
    fill: #505050;
    font-size: 5.5px;
    text-anchor: start;
}

.chart .end,
.chart .slant {
    text-anchor: end;
}

.chart .slant {
    fill: #303030;
    font-size: 5.9px;
}

.chart .value {
    fill: #333;
    font-size: 8.5px;
    font-weight: bold;
}

.chart .cell-text {
    fill: #333;
    font-size: 6.2px;
    font-weight: bold;
}

.chart .pct {
    font-size: 9.5px;
    font-weight: bold;
}

.vscroll {
    display: flex;
    flex-direction: column;
    align-items: center;
    gap: 7px;
    width: 19px;
    height: 683px;
    margin-left: 4px;
    padding-top: 6px;
    border-radius: 9px;
    background: #141414;
}

.thumb {
    border-radius: 5px;
    background: #9b9b9b;
}

.vscroll .thumb {
    width: 10px;
    height: 637px;
}

.vscroll svg:last-child {
    margin-top: 6px;
}

/* sheet tabs */
.sheet-tabs {
    display: flex;
    align-items: center;
    height: 41px;
    border-top: 1px solid #555;
    border-bottom: 1px solid #444;
    font-size: 16.4px;
    white-space: nowrap;
}

.nav-prev { margin-left: 32px; }
.nav-next { margin-left: 32px; }
.nav-prev, .nav-next, .add { margin-top: -2px; }

.tab {
    height: 24px;
    border-right: 1px solid #6a6a6a;
    line-height: 24px;
    text-align: center;
}

.t1 { width: 119px; margin-left: 56px; }
.t2 { width: 125px; }
.t3 { width: 135px; }

.current {
    align-self: flex-start;
    width: 98px;
    height: 35px;
    margin-left: 5px;
    border: 0;
    border-radius: 0 0 5px 5px;
    background: #fff;
    color: #222;
    font-weight: 600;
    line-height: 32px;
}

.current u {
    display: inline-block;
    height: 32px;
    border-bottom: 2px solid #107c41;
    text-decoration: none;
}

.tab-end {
    width: 1px;
    height: 24px;
    margin-left: 4px;
    background: #6a6a6a;
}

.add { margin-left: 52px; }
.sheet-tabs .vdots { margin-left: 465px; }

.hscroll {
    display: flex;
    align-items: center;
    gap: 6px;
    width: 720px;
    height: 21px;
    margin-left: 18px;
    padding-left: 5px;
    border-radius: 10px;
    background: #141414;
}

.hscroll .thumb {
    width: 677px;
    height: 11px;
}

/* status bar */
.status {
    display: flex;
    align-items: center;
    height: 26px;
    background: #141414;
    font-size: 12.6px;
    white-space: nowrap;
}

.ready { width: 61px; padding-left: 14px; }
.macro { margin-left: 14px; }
.access { margin: 0 4px 0 22px; }

.status b {
    width: 160px;
    letter-spacing: -.07px;
}

.views {
    display: flex;
    margin-left: 1250px;
}

.views span {
    display: flex;
    align-items: center;
    justify-content: center;
    width: 50px;
    height: 26px;
}

.views .on {
    background: #252525;
}

.zoom {
    margin-left: 7px;
}

.zoom-value {
    margin-left: 13px;
}

/* taskbar */
.taskbar {
    display: flex;
    align-items: center;
    height: 58px;
    border-top: 1px solid #3b5045;
    background: #152a1f;
    font-size: 14.4px;
}

.weather {
    position: relative;
    display: flex;
    align-items: center;
    gap: 9px;
    width: 393px;
    padding-left: 24px;
    line-height: 20px;
}

.weather bdi {
    color: #b5beb9;
    font-size: 14px;
}

.badge {
    position: absolute;
    left: 39px;
    top: -2px;
    width: 20px;
    height: 20px;
    border-radius: 50%;
    background: #ff8f95;
    color: #222;
    font-size: 13px;
    text-align: center;
}

.start {
    margin-left: 24px;
}

.task-search {
    display: flex;
    align-items: center;
    gap: 12px;
    width: 274px;
    height: 40px;
    margin-left: 17px;
    padding-left: 15px;
    border-radius: 20px;
    border-top: 1px solid #56685e;
    background: #364a3f;
    color: #c9d0cc;
    font-size: 16px;
}

.brief {
    display: flex;
    align-items: center;
    justify-content: center;
    width: 64px;
    height: 36px;
    margin: 0 4px 0 auto;
    border-radius: 18px;
    background: #4d5f55;
}

.apps {
    display: flex;
    margin-left: 3px;
}

.apps > span {
    position: relative;
    display: flex;
    align-items: center;
    justify-content: center;
    width: 55px;
    height: 57px;
    padding-top: 1px;
}

.apps .open::after {
    content: "";
    position: absolute;
    left: 24px;
    bottom: 4px;
    width: 8px;
    height: 4px;
    border-radius: 2px;
    background: #9b9b9b;
}

.office b {
    position: absolute;
    left: 13px;
    top: 18px;
    width: 17px;
    font-size: 14px;
    line-height: 22px;
    text-align: center;
}

.apps em {
    position: absolute;
    right: 6px;
    top: 10px;
    width: 20px;
    height: 19px;
    border-radius: 10px;
    background: #4a4f4c;
    font-size: 12px;
    font-style: normal;
    font-weight: 600;
    line-height: 19px;
    text-align: center;
}

.apps .zoom-app {
    width: 30px;
    height: 30px;
    margin: 14px 12px 0 13px;
    padding: 0 0 2px;
    border-radius: 13px;
    background: #0b5cff;
    font-size: 9px;
    font-weight: bold;
}

.tray {
    display: flex;
    align-items: center;
    gap: 9px;
    margin-left: 84px;
}

.lang {
    width: 12px;
    margin: 4px 24px 0 23px;
    font: 16px "DejaVu Sans", sans-serif;
}

.clock {
    width: 89px;
    line-height: 20px;
    text-align: right;
}

.bell {
    margin-left: 1px;
}

/* overlay logo across the bars */
.watermark {
    position: absolute;
    left: 839px;
    top: 945px;
    overflow: visible;
    fill: #9a9c9b;
    opacity: .55;
}

.watermark text {
    text-anchor: middle;
}

.wm-ar {
    font: bold 74px "DejaVu Sans", sans-serif;
}

.wm-en {
    font: 500 40px Roboto, sans-serif;
}
```
